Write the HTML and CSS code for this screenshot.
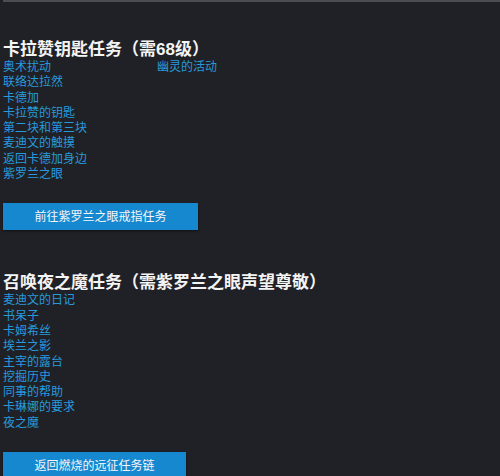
FILE: index.html
```html
<!DOCTYPE html>
<html lang="zh-CN">
<head>
<meta charset="utf-8">
<link rel="stylesheet" href="styles.css">
</head>
<body>
<div class="topbar"></div>
<main class="content">
  <section class="quest quest-first">
    <h2 class="quest-title">卡拉赞钥匙任务（需68级）</h2>
    <div class="quest-list">
      <div class="row"><a class="link col1">奥术扰动</a><a class="link">幽灵的活动</a></div>
      <div class="row"><a class="link">联络达拉然</a></div>
      <div class="row"><a class="link">卡德加</a></div>
      <div class="row"><a class="link">卡拉赞的钥匙</a></div>
      <div class="row"><a class="link">第二块和第三块</a></div>
      <div class="row"><a class="link">麦迪文的触摸</a></div>
      <div class="row"><a class="link">返回卡德加身边</a></div>
      <div class="row"><a class="link">紫罗兰之眼</a></div>
    </div>
    <a class="btn">前往紫罗兰之眼戒指任务</a>
  </section>
  <section class="quest quest-second">
    <h2 class="quest-title">召唤夜之魔任务（需紫罗兰之眼声望尊敬）</h2>
    <div class="quest-list">
      <div class="row"><a class="link">麦迪文的日记</a></div>
      <div class="row"><a class="link">书呆子</a></div>
      <div class="row"><a class="link">卡姆希丝</a></div>
      <div class="row"><a class="link">埃兰之影</a></div>
      <div class="row"><a class="link">主宰的露台</a></div>
      <div class="row"><a class="link">挖掘历史</a></div>
      <div class="row"><a class="link">同事的帮助</a></div>
      <div class="row"><a class="link">卡琳娜的要求</a></div>
      <div class="row"><a class="link">夜之魔</a></div>
    </div>
    <a class="btn">返回燃烧的远征任务链</a>
  </section>
</main>
</body>
</html>
```
FILE: styles.css
```css
html, body {
  margin: 0;
  padding: 0;
  background: #202126;
  height: 100%;
  overflow: hidden;
}
body {
  font-family: "Liberation Sans", "Noto Sans CJK SC", sans-serif;
  color: #f2f2f2;
}
.topbar {
  height: 2px;
  margin-left: 3px;
  background: #4b4c52;
}
.content {
  padding-left: 3px;
}
.quest-first {
  padding-top: 38px;
}
.quest-second {
  padding-top: 43px;
}
.quest-title {
  margin: 0;
  font-size: 17px;
  line-height: 20px;
  font-weight: 700;
  color: #f4f4f4;
}
.quest-list {
  display: flex;
  flex-direction: column;
  margin-bottom: 21px;
}
.row {
  display: flex;
  height: 15.3px;
  line-height: 15.3px;
}
.link {
  font-size: 12px;
  color: #279ade;
  white-space: nowrap;
}
.col1 {
  width: 154px;
}
.btn {
  display: inline-block;
  height: 26px;
  line-height: 26px;
  padding: 1px 31.5px 0;
  background: #1688cf;
  color: #f4f6f8;
  font-size: 12px;
  box-shadow: 0 1px 2px rgba(0, 0, 0, 0.5);
}
```
